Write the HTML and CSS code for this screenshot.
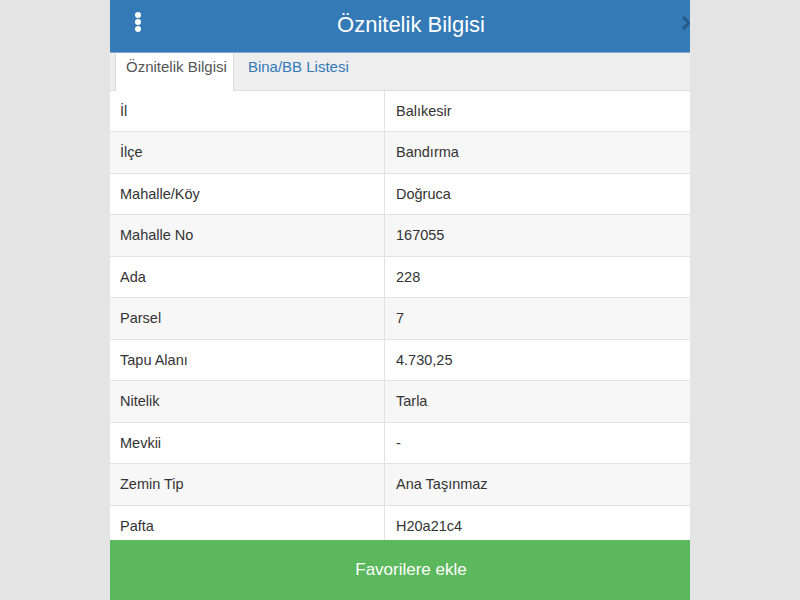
FILE: index.html
```html
<!DOCTYPE html>
<html lang="tr">
<head>
    <meta charset="UTF-8">
    <meta name="viewport" content="width=device-width, initial-scale=1.0">
    <title>Öznitelik Bilgisi</title>
    <link rel="stylesheet" href="styles.css">
</head>
<body>
    <div class="panel">
        <div class="panel-inner">
            <header class="panel-header">
                <button class="menu-btn" aria-label="Menü">
                    <span></span><span></span><span></span>
                </button>
                <h1>Öznitelik Bilgisi</h1>
                <svg class="close-arrow" width="10" height="16" viewBox="0 0 10 16">
                    <path d="M2 2 L8 8 L2 14" fill="none" stroke="#23527c" stroke-width="3"/>
                </svg>
            </header>

            <ul class="tabs">
                <li class="active"><a href="#">Öznitelik Bilgisi</a></li>
                <li><a href="#">Bina/BB Listesi</a></li>
            </ul>

            <div class="info-table">
                <div class="row"><div class="key">İl</div><div class="val">Balıkesir</div></div>
                <div class="row"><div class="key">İlçe</div><div class="val">Bandırma</div></div>
                <div class="row"><div class="key">Mahalle/Köy</div><div class="val">Doğruca</div></div>
                <div class="row"><div class="key">Mahalle No</div><div class="val">167055</div></div>
                <div class="row"><div class="key">Ada</div><div class="val">228</div></div>
                <div class="row"><div class="key">Parsel</div><div class="val">7</div></div>
                <div class="row"><div class="key">Tapu Alanı</div><div class="val">4.730,25</div></div>
                <div class="row"><div class="key">Nitelik</div><div class="val">Tarla</div></div>
                <div class="row"><div class="key">Mevkii</div><div class="val">-</div></div>
                <div class="row"><div class="key">Zemin Tip</div><div class="val">Ana Taşınmaz</div></div>
                <div class="row"><div class="key">Pafta</div><div class="val">H20a21c4</div></div>
            </div>

            <button class="fav-btn">Favorilere ekle</button>
        </div>
    </div>
</body>
</html>
```

FILE: styles.css
```css
body {
    font-family: "Liberation Sans", Arial, sans-serif;
    margin: 0;
    padding: 0;
    background-color: #e4e4e4;
    color: #333;
}

.panel {
    width: 580px;
    height: 600px;
    margin: 0 auto;
    overflow: hidden;
    background-color: #fff;
}

.panel-inner {
    width: 602px;
    height: 600px;
    display: flex;
    flex-direction: column;
}

.panel-header {
    height: 52px;
    background-color: #337ab7;
    border-bottom: 1px solid #7ea8d2;
    display: flex;
    align-items: center;
    position: relative;
    flex-shrink: 0;
}

.panel-header h1 {
    flex: 1;
    margin: 0;
    text-align: center;
    color: #fff;
    font-size: 22px;
    font-weight: normal;
    line-height: 26px;
    padding-bottom: 3px;
}

.menu-btn {
    position: absolute;
    left: 22px;
    top: 12px;
    width: 12px;
    height: 22px;
    padding: 0;
    border: none;
    background: none;
    display: flex;
    flex-direction: column;
    align-items: center;
    gap: 1px;
}

.menu-btn span {
    width: 6px;
    height: 6px;
    border-radius: 50%;
    background-color: #fff;
}

.close-arrow {
    position: absolute;
    right: 21px;
    top: 15px;
    opacity: 0.8;
}

.tabs {
    list-style: none;
    margin: 0;
    padding: 0 0 0 5px;
    height: 37px;
    background-color: #eee;
    border-bottom: 1px solid #ddd;
    display: flex;
    flex-shrink: 0;
}

.tabs li a {
    display: block;
    padding: 4px 14px 0 14px;
    height: 33px;
    line-height: 20px;
    font-size: 15px;
    color: #337ab7;
    text-decoration: none;
}

.tabs li.active a {
    background-color: #fff;
    color: #555;
    border-left: 1px solid #ddd;
    border-right: 1px solid #ddd;
    height: 34px;
    padding-left: 10px;
    padding-right: 6px;
}

.info-table {
    flex: 1;
    overflow: hidden;
    font-size: 14.5px;
}

.row {
    display: grid;
    grid-template-columns: 274px 1fr;
    border-bottom: 1px solid #e2e2e2;
    background-color: #fff;
}

.row:nth-child(even) {
    background-color: #f7f7f7;
}

.key,
.val {
    padding: 10px 10px;
    line-height: 20.45px;
}

.val {
    border-left: 1px solid #e2e2e2;
    padding-left: 11px;
}

.fav-btn {
    height: 60px;
    flex-shrink: 0;
    border: none;
    background-color: #5cb85c;
    color: #fff;
    font-family: inherit;
    font-size: 17px;
}
```
